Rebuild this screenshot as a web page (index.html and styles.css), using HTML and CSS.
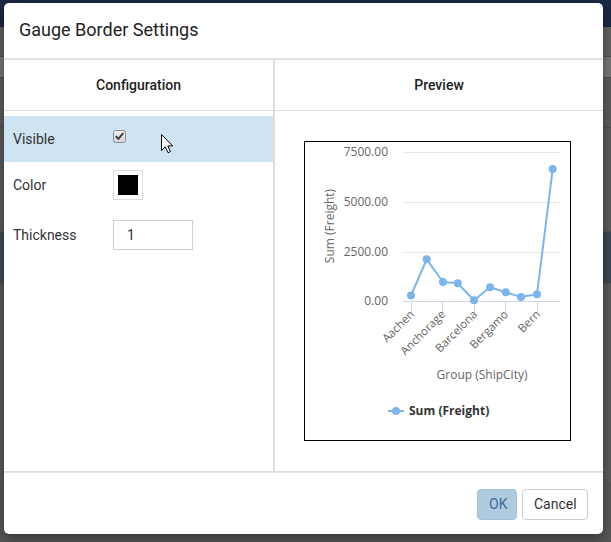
FILE: index.html
```html
<!DOCTYPE html>
<html>
<head>
<meta charset="utf-8">
<link rel="stylesheet" href="styles.css">
</head>
<body>
<div class="backdrop">
  <div class="bd-top"></div>
  <div class="bd-band bd-a"></div>
  <div class="bd-band bd-b"></div>
  <div class="bd-band bd-c"></div>
  <div class="bd-band bd-d"></div>
  <div class="bd-band bd-e"></div>
  <div class="bd-band bd-f"></div>
  <div class="bd-band bd-g"></div>
</div>

<div class="modal">
  <div class="modal-header"><h4 class="modal-title">Gauge Border Settings</h4></div>
  <div class="modal-body">
    <div class="col col-config">
      <div class="col-head">Configuration</div>
      <div class="rows">
        <div class="row active">
          <span class="label">Visible</span>
          <svg class="checkbox" width="13" height="13" viewBox="0 0 13 13">
            <defs>
              <linearGradient id="cbg" x1="0" y1="0" x2="0" y2="1">
                <stop offset="0" stop-color="#f2f2f2"/>
                <stop offset="1" stop-color="#d2d2d2"/>
              </linearGradient>
            </defs>
            <rect x="0.5" y="0.5" width="12" height="12" rx="2" fill="url(#cbg)" stroke="#8c8c8c"/>
            <path d="M3.2 6.6 L5.4 8.9 L9.8 3.6" fill="none" stroke="#3a3a3a" stroke-width="1.9" stroke-linecap="round" stroke-linejoin="round"/>
          </svg>
        </div>
        <div class="row">
          <span class="label">Color</span>
          <span class="swatch"><span class="swatch-fill"></span></span>
        </div>
        <div class="row row-thick">
          <span class="label">Thickness</span>
          <span class="num">1</span>
        </div>
      </div>
    </div>
    <div class="col col-preview">
      <div class="col-head">Preview</div>
      <div class="preview-area">
        <div class="chart-box">
          <svg class="chart" width="265" height="298" viewBox="304 141 265 298">
            <g stroke="#e6e6e6" stroke-width="1">
              <line x1="402" y1="151.5" x2="559" y2="151.5"/>
              <line x1="402" y1="201.5" x2="559" y2="201.5"/>
              <line x1="402" y1="251.5" x2="559" y2="251.5"/>
            </g>
            <g stroke="#ccd6eb" stroke-width="1">
              <line x1="402" y1="300.5" x2="559" y2="300.5"/>
              <line x1="410.5" y1="300" x2="410.5" y2="311"/>
              <line x1="441.5" y1="300" x2="441.5" y2="311"/>
              <line x1="473.5" y1="300" x2="473.5" y2="311"/>
              <line x1="504.5" y1="300" x2="504.5" y2="311"/>
              <line x1="536.5" y1="300" x2="536.5" y2="311"/>
            </g>
            <g class="ylab" text-anchor="end">
              <text x="387" y="155">7500.00</text>
              <text x="387" y="205">5000.00</text>
              <text x="387" y="255">2500.00</text>
              <text x="387" y="304">0.00</text>
            </g>
            <text class="atitle" x="333" y="225" text-anchor="middle" transform="rotate(-90 333 225)">Sum (Freight)</text>
            <g class="xlab" text-anchor="end">
              <text x="414" y="314" transform="rotate(-45 414 314)">Aachen</text>
              <text x="445" y="314" transform="rotate(-45 445 314)">Anchorage</text>
              <text x="477" y="314" transform="rotate(-45 477 314)">Barcelona</text>
              <text x="508" y="314" transform="rotate(-45 508 314)">Bergamo</text>
              <text x="540" y="314" transform="rotate(-45 540 314)">Bern</text>
            </g>
            <text class="atitle" x="481" y="378" text-anchor="middle">Group (ShipCity)</text>
            <polyline fill="none" stroke="#7cb5ec" stroke-width="2" stroke-linejoin="round"
              points="410,294.5 425.7,258.3 442,281 456.7,282.3 473,299.3 489,286.3 504.7,291.3 520,296 536,293.3 551.7,168"/>
            <g fill="#7cb5ec">
              <circle cx="410" cy="294.5" r="4"/>
              <circle cx="425.7" cy="258.3" r="4"/>
              <circle cx="442" cy="281" r="4"/>
              <circle cx="456.7" cy="282.3" r="4"/>
              <circle cx="473" cy="299.3" r="4"/>
              <circle cx="489" cy="286.3" r="4"/>
              <circle cx="504.7" cy="291.3" r="4"/>
              <circle cx="520" cy="296" r="4"/>
              <circle cx="536" cy="293.3" r="4"/>
              <circle cx="551.7" cy="168" r="4"/>
            </g>
            <line x1="387" y1="410" x2="403" y2="410" stroke="#7cb5ec" stroke-width="2"/>
            <circle cx="395" cy="410" r="4" fill="#7cb5ec"/>
            <text class="legend" x="408" y="414">Sum (Freight)</text>
          </svg>
        </div>
      </div>
    </div>
  </div>
  <div class="modal-footer">
    <button class="btn btn-ok">OK</button>
    <button class="btn btn-cancel">Cancel</button>
  </div>
</div>

<svg class="cursor" width="13" height="20" viewBox="0 0 13 20">
  <path d="M0.5 0.5 L0.5 16.5 L4.3 12.8 L7 18.7 L9.4 17.6 L6.8 11.9 L11.6 11.9 Z" fill="#fff" stroke="#000" stroke-width="1" stroke-linejoin="miter"/>
</svg>
</body>
</html>
```

FILE: styles.css
```css
* { box-sizing: border-box; }

html, body {
  margin: 0;
  padding: 0;
  width: 611px;
  height: 542px;
  overflow: hidden;
}

body {
  position: relative;
  background: #5b5b5b;
  font-family: Roboto, "Liberation Sans", sans-serif;
}

/* dimmed application behind the dialog */
.backdrop {
  display: flex;
  flex-direction: column;
  height: 542px;
}
.bd-top { height: 27px; background: #1a2a43; }
.bd-band { border-bottom: 1px solid #535353; }
.bd-a { height: 30px; background: #646464; }
.bd-b { height: 21px; background: #7a7a7a; }
.bd-c { height: 50px; background: #5f5f5f; }
.bd-d { height: 104px; background: #5d5d5d; }
.bd-e { height: 52px; background: #3e4a57; }
.bd-f { height: 200px; background: #5c5c5c; }
.bd-g { flex: 1; background: #595959; }

/* dialog */
.modal {
  position: absolute;
  left: 4px;
  top: 3px;
  width: 599px;
  height: 531px;
  background: #fff;
  border-radius: 5px;
  box-shadow: 0 4px 14px rgba(0, 0, 0, 0.45);
  display: flex;
  flex-direction: column;
  overflow: hidden;
}

.modal-header {
  height: 56px;
  border-bottom: 1px solid #e5e5e5;
  display: flex;
  align-items: center;
  padding-left: 15px;
  padding-bottom: 2px;
}
.modal-title {
  margin: 0;
  font-size: 18px;
  font-weight: 400;
  color: #222;
}

.modal-body {
  display: grid;
  grid-template-columns: 270px 1fr;
  border-top: 1px solid #dedede;
  border-bottom: 1px solid #dedede;
}

.col-config { border-right: 1px solid #dedede; }
.col-preview { border-left: 1px solid #dedede; }

.col-head {
  height: 51px;
  border-bottom: 1px solid #dedede;
  display: flex;
  align-items: center;
  justify-content: center;
  font-size: 14px;
  font-weight: 500;
  color: #222;
  padding-bottom: 1px;
}

.rows {
  padding-top: 5px;
  height: 360px;
}

.row {
  height: 46px;
  display: flex;
  align-items: center;
  padding-left: 9px;
  font-size: 14px;
  color: #333;
}
.row.active { background: #cfe4f2; }
.row-thick { margin-top: 4px; }

.label { width: 100px; }

.checkbox { margin-top: -6px; }

.swatch {
  width: 30px;
  height: 30px;
  border: 1px solid #dcdcdc;
  padding: 4px;
}
.swatch-fill {
  display: block;
  width: 20px;
  height: 20px;
  background: #000;
}

.num {
  width: 80px;
  height: 30px;
  border: 1px solid #cfcfcf;
  display: flex;
  align-items: center;
  padding-left: 13px;
  color: #333;
}

.preview-area {
  height: 360px;
  display: flex;
  align-items: center;
  justify-content: center;
  padding-right: 3px;
}

.chart-box {
  width: 267px;
  height: 300px;
  border: 1px solid #000;
}
.chart { display: block; font-family: "Open Sans", "DejaVu Sans", sans-serif; }
.ylab text { font-size: 12px; fill: #666; }
.xlab text { font-size: 11.5px; fill: #666; }
.atitle { font-size: 12px; fill: #666; }
.legend { font-size: 12px; font-weight: 700; fill: #333; }

.modal-footer {
  flex: 1;
  border-top: 1px solid #e5e5e5;
  display: flex;
  align-items: center;
  justify-content: flex-end;
  gap: 5px;
  padding-right: 15px;
  padding-top: 1px;
}

.btn {
  height: 31px;
  border-radius: 4px;
  font-family: Roboto, "Liberation Sans", sans-serif;
  font-size: 14px;
  padding: 0 11px;
  cursor: default;
}
.btn-ok {
  width: 40px;
  background: #b0cbe0;
  border: 1px solid #a3c1d8;
  color: #3d6c98;
}
.btn-cancel {
  width: 66px;
  background: #fff;
  border: 1px solid #cccccc;
  color: #333;
}

.cursor {
  position: absolute;
  left: 161px;
  top: 134px;
}
```
